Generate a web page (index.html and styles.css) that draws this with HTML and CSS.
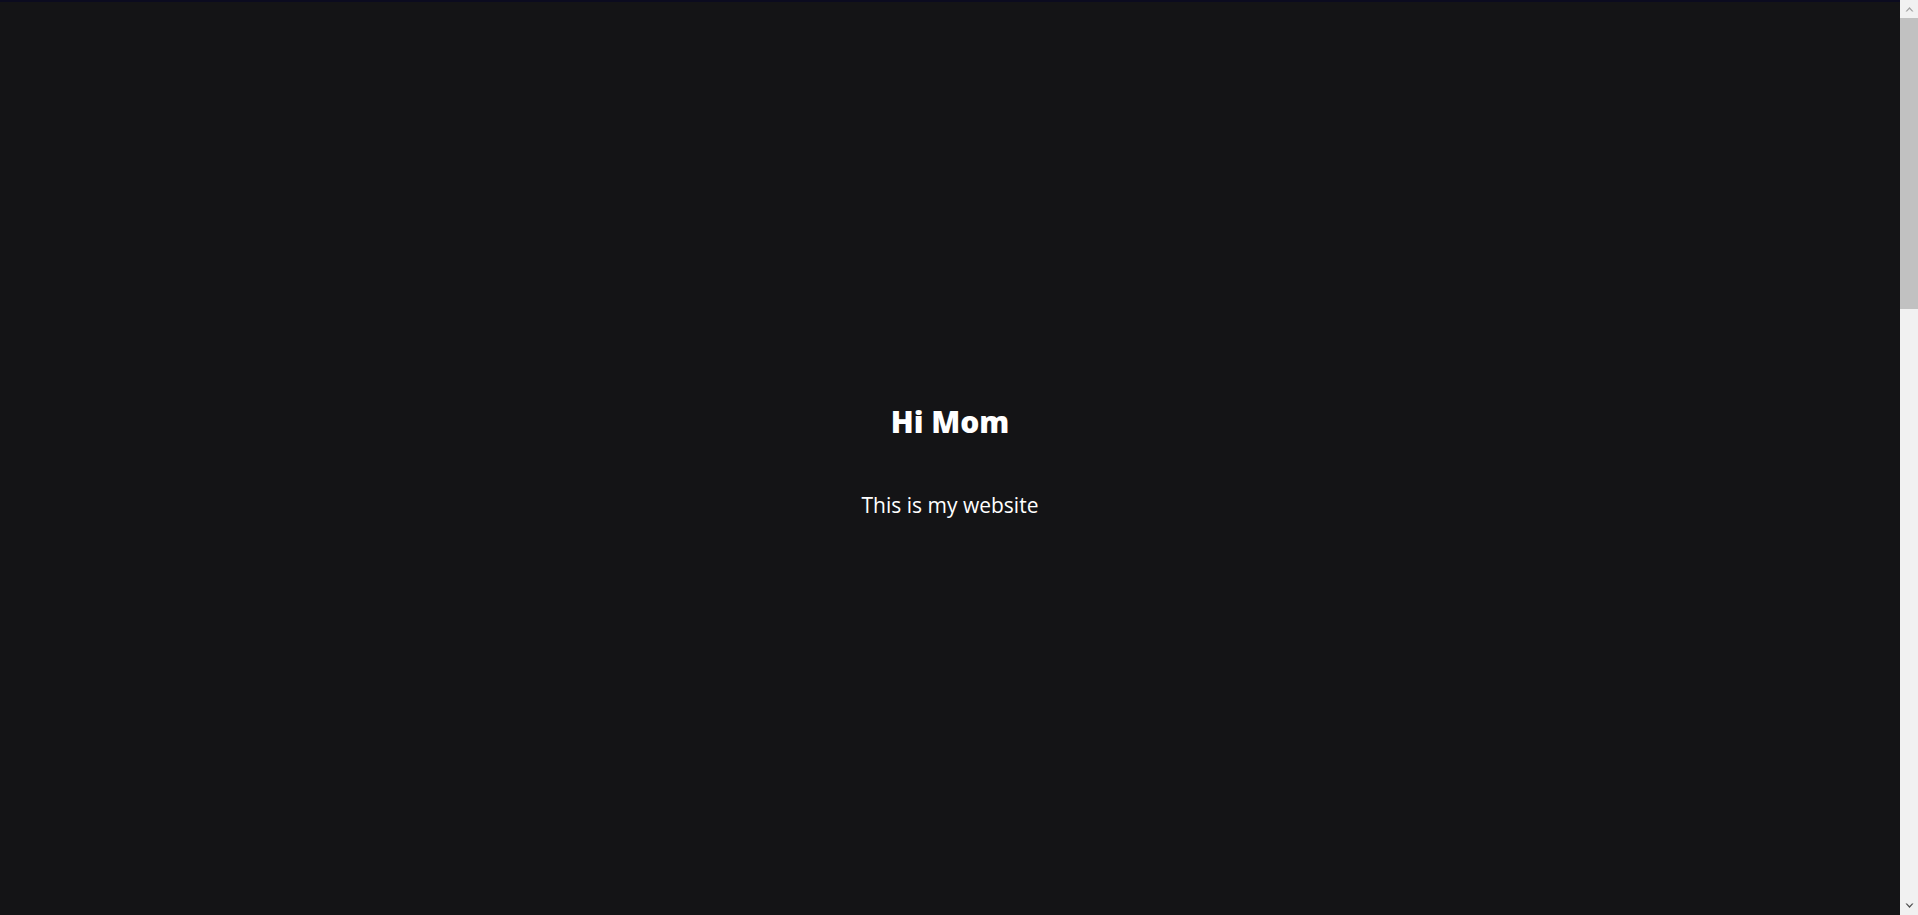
FILE: index.html
```html
<!DOCTYPE html>
<html lang="en">
<head>
<meta charset="utf-8">
<title>Hi Mom</title>
<link rel="stylesheet" href="styles.css">
</head>
<body>
<div class="app">
  <main class="page">
    <div class="topline"></div>
    <section class="hero">
      <h1 class="title">Hi Mom</h1>
      <p class="subtitle">This is my website</p>
    </section>
  </main>
  <aside class="scrollbar" aria-hidden="true">
    <div class="sb-button">
      <svg width="9" height="6" viewBox="0 0 9 6"><path d="M0.5 5.5 L4.5 1 L8.5 5.5 L7 5.5 L4.5 3 L2 5.5 Z" fill="#a3a3a3"/></svg>
    </div>
    <div class="sb-thumb"></div>
    <div class="sb-track"></div>
    <div class="sb-button">
      <svg width="9" height="6" viewBox="0 0 9 6"><path d="M0.5 0.5 L4.5 5 L8.5 0.5 L7 0.5 L4.5 3 L2 0.5 Z" fill="#505050"/></svg>
    </div>
  </aside>
</div>
</body>
</html>
```
FILE: styles.css
```css
html, body {
  margin: 0;
  padding: 0;
  background: #141416;
  overflow: hidden;
}
body {
  font-family: "Open Sans", "Noto Sans", sans-serif;
  color: #ffffff;
}
.app {
  display: grid;
  grid-template-columns: 1fr 18px;
  height: 100vh;
}
.page {
  display: flex;
  flex-direction: column;
  min-width: 0;
}
.topline {
  height: 2px;
  background: #0b0b1f;
}
.hero {
  display: flex;
  flex-direction: column;
  align-items: center;
  padding-top: 402px;
}
.title {
  margin: 0;
  font-size: 30px;
  font-weight: 800;
  line-height: 36px;
}
.subtitle {
  margin: 51px 0 0;
  font-size: 21px;
  font-weight: 400;
  line-height: 28px;
}
.scrollbar {
  display: flex;
  flex-direction: column;
  background: #f1f1f1;
}
.sb-button {
  height: 18px;
  display: flex;
  align-items: center;
  justify-content: center;
}
.sb-thumb {
  height: 291px;
  background: #c1c1c1;
}
.sb-track {
  flex: 1;
}
```
